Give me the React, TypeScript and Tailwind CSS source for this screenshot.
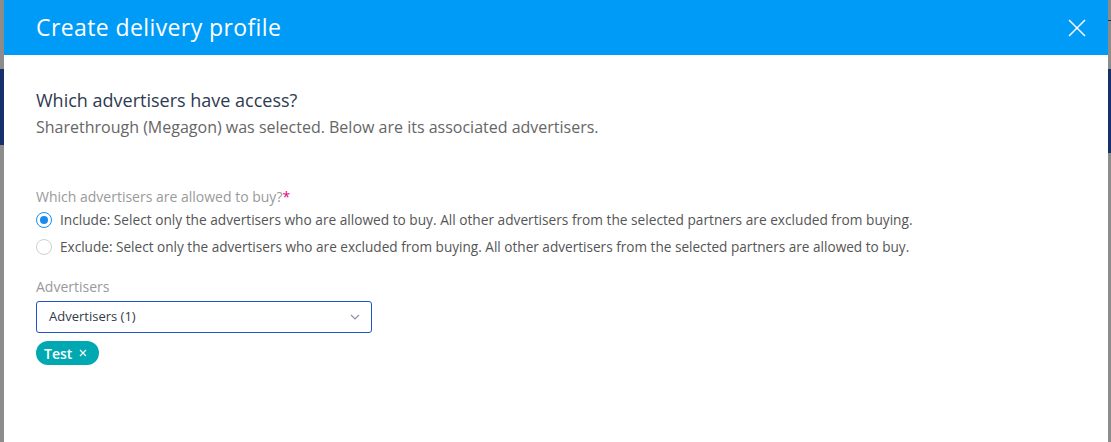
import React from "react";

export default function App() {
  return (
    <div className="relative w-[1111px] h-[442px] overflow-hidden bg-[#8c8c8c] flex" style={{ fontFamily: '"Open Sans", sans-serif' }}>
      {/* left overlay strip */}
      <div className="w-[4px] shrink-0 flex flex-col">
        <div className="h-[69px]" />
        <div className="h-[76px] bg-[#17306b]" />
      </div>
      {/* modal */}
      <div className="w-[1104px] shrink-0 bg-white flex flex-col">
        <div className="h-[55px] bg-[#009bf7] flex items-center justify-between pl-[32px] pr-[22px]">
          <div className="text-white text-[23px] tracking-[0.4px]" style={{ fontFamily: '"Open Sans", sans-serif' }}>
            Create delivery profile
          </div>
          <svg width="18" height="18" viewBox="0 0 18 18" className="mt-[1px]">
            <path d="M1 1L17 17M17 1L1 17" stroke="white" strokeWidth="1.5" fill="none" />
          </svg>
        </div>
        <div className="pl-[32px] pt-[33px] flex flex-col">
          <div className="text-[18px] leading-[24px] text-[#2e3a50]">Which advertisers have access?</div>
          <div className="text-[16px] leading-[22px] mt-[4px] text-[#666666]">
            Sharethrough (Megagon) was selected. Below are its associated advertisers.
          </div>
          <div className="mt-[50px] text-[14px] leading-[18px] text-[#9a9a9a]">
            Which advertisers are allowed to buy?<span className="text-[#e5007d]">*</span>
          </div>
          <div className="mt-[5px] flex items-center gap-[8px] h-[18px]">
            <span className="w-[16px] h-[16px] rounded-full border-[1.5px] border-[#1a8cf0] flex items-center justify-center">
              <span className="w-[8px] h-[8px] rounded-full bg-[#1a8cf0]" />
            </span>
            <span className="text-[13.7px] text-[#555555]">
              Include: Select only the advertisers who are allowed to buy. All other advertisers from the selected partners are excluded from buying.
            </span>
          </div>
          <div className="mt-[9px] flex items-center gap-[8px] h-[18px]">
            <span className="w-[16px] h-[16px] rounded-full border border-[#cfcfcf]" />
            <span className="text-[13.6px] text-[#555555]">
              Exclude: Select only the advertisers who are excluded from buying. All other advertisers from the selected partners are allowed to buy.
            </span>
          </div>
          <div className="mt-[22px] text-[14px] leading-[18px] text-[#9a9a9a]">Advertisers</div>
          <div className="mt-[5px] w-[336px] h-[32px] border border-[#1f55c6] rounded-[3px] flex items-center justify-between pl-[12px] pr-[11px]">
            <span className="text-[13px] text-[#333b4a]">Advertisers (1)</span>
            <svg width="10" height="6" viewBox="0 0 10 6">
              <path d="M1 1L5 5L9 1" stroke="#8a93a8" strokeWidth="1.2" fill="none" />
            </svg>
          </div>
          <div className="mt-[8px] self-start h-[24px] rounded-full bg-[#00a9b1] flex items-center pl-[8px] pr-[12px] gap-[7px]">
            <span className="text-white text-[14px] font-semibold">Test</span>
            <svg width="8" height="8" viewBox="0 0 8 8">
              <path d="M1 1L7 7M7 1L1 7" stroke="white" strokeWidth="1.2" fill="none" />
            </svg>
          </div>
        </div>
      </div>
      {/* right overlay strip */}
      <div className="w-[3px] shrink-0 flex flex-col">
        <div className="h-[20px]" />
        <div className="h-[1px] bg-[#17306b]" />
        <div className="h-[48px]" />
        <div className="h-[84px] bg-[#17306b]" />
      </div>
    </div>
  );
}
